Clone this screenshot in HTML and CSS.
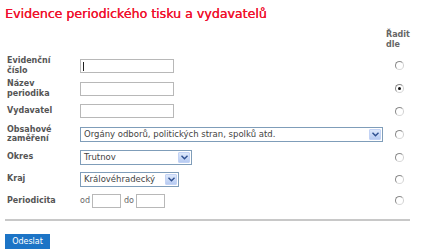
FILE: index.html
```html
<!DOCTYPE html>
<html lang="cs">
<head>
    <meta charset="UTF-8">
    <title>Evidence periodického tisku a vydavatelů</title>
    <link rel="stylesheet" href="styles.css">
</head>
<body>
    <h1 class="title">Evidence periodického tisku a vydavatelů</h1>

    <div class="form">
        <div class="sort-head">Řadit dle</div>

        <label class="lbl">Evidenční číslo</label>
        <div class="field"><span class="input focus"></span></div>
        <div class="sort"><span class="radio"></span></div>

        <label class="lbl">Název periodika</label>
        <div class="field"><span class="input"></span></div>
        <div class="sort"><span class="radio checked"></span></div>

        <label class="lbl">Vydavatel</label>
        <div class="field"><span class="input"></span></div>
        <div class="sort"><span class="radio"></span></div>

        <label class="lbl">Obsahové zaměření</label>
        <div class="field">
            <span class="select wide"><span class="val">Orgány odborů, politických stran, spolků atd.</span><span class="arrow"><svg width="7" height="5" viewBox="0 0 7 5"><path d="M0.5 0.8 L3.5 3.8 L6.5 0.8" fill="none" stroke="#2d4f8f" stroke-width="1.4"/></svg></span></span>
        </div>
        <div class="sort"><span class="radio"></span></div>

        <label class="lbl">Okres</label>
        <div class="field">
            <span class="select okres"><span class="val">Trutnov</span><span class="arrow"><svg width="7" height="5" viewBox="0 0 7 5"><path d="M0.5 0.8 L3.5 3.8 L6.5 0.8" fill="none" stroke="#2d4f8f" stroke-width="1.4"/></svg></span></span>
        </div>
        <div class="sort"><span class="radio"></span></div>

        <label class="lbl">Kraj</label>
        <div class="field">
            <span class="select kraj"><span class="val">Královéhradecký</span><span class="arrow"><svg width="7" height="5" viewBox="0 0 7 5"><path d="M0.5 0.8 L3.5 3.8 L6.5 0.8" fill="none" stroke="#2d4f8f" stroke-width="1.4"/></svg></span></span>
        </div>
        <div class="sort"><span class="radio"></span></div>

        <label class="lbl">Periodicita</label>
        <div class="field period">
            <span>od</span><span class="input small"></span>
            <span>do</span><span class="input small"></span>
        </div>
        <div class="sort"><span class="radio"></span></div>
    </div>

    <hr class="sep">

    <button class="btn">Odeslat</button>
</body>
</html>
```

FILE: styles.css
```css
body {
    margin: 0;
    padding: 0 5px;
    font-family: "DejaVu Sans", Verdana, sans-serif;
    background: #fff;
    color: #555;
}
.title {
    margin: 0;
    padding-top: 6px;
    font-size: 12.6px;
    font-weight: normal;
    color: #f0102c;
    line-height: 16px;
    text-shadow: 0.3px 0 0 #f0102c;
}
.form {
    display: grid;
    grid-template-columns: 73px 306px 27px;
    grid-template-rows: auto 19px 19px 18px 20px 18px 18px 17px;
    row-gap: 4px;
    align-items: center;
    padding-left: 2px;
    margin-top: 8px;
}
.sort-head {
    grid-column: 3;
    font-size: 8px;
    font-weight: bold;
    line-height: 9.5px;
    color: #666;
    margin-bottom: 3px;
}
.lbl {
    font-size: 8px;
    font-weight: bold;
    line-height: 9.5px;
    color: #555;
    width: 50px;
}
.field {
    display: flex;
    align-items: center;
    font-size: 8px;
    color: #666;
}
.input {
    display: block;
    width: 92px;
    height: 12px;
    border: 1px solid #b8b8b8;
    background: #fff;
    box-sizing: content-box;
}
.input.focus {
    background: linear-gradient(90deg, #fff 2px, #222 2px, #222 3px, #fff 3px);
    background-size: 100% 9px;
    background-position: 0 2px;
    background-repeat: no-repeat;
}
.period .input.small {
    width: 27px;
    height: 12px;
    margin: 0 3px 0 2px;
}
.select {
    display: flex;
    align-items: center;
    justify-content: space-between;
    height: 13px;
    border: 1px solid #7f9db9;
    background: #fff;
    font-size: 8.5px;
    color: #444;
}
.select .val {
    padding-left: 3px;
    white-space: nowrap;
}
.select.wide { width: 301px; }
.select.okres { width: 110px; }
.select.kraj { width: 97px; }
.arrow {
    display: flex;
    align-items: center;
    justify-content: center;
    width: 12px;
    height: 11px;
    margin-right: 1px;
    background: linear-gradient(#dde8fb, #b7cbf2);
    border: 1px solid #c3d3f5;
    box-sizing: border-box;
    border-radius: 1px;
}
.sort {
    display: flex;
    justify-content: center;
}
.radio {
    display: block;
    width: 7px;
    height: 7px;
    border-radius: 50%;
    border: 1px solid #9a9a9a;
    border-color: #8a8a8a #d0d0d0 #d8d8d8 #8a8a8a;
    background: #fff;
    position: relative;
}
.radio.checked::after {
    content: "";
    position: absolute;
    left: 2px;
    top: 2px;
    width: 3px;
    height: 3px;
    border-radius: 50%;
    background: #111;
}
.sep {
    width: 405px;
    margin: 10px 0 8px 0;
    border: none;
    border-top: 2px solid #c8c8c8;
}
.btn {
    background-color: #1c74c6;
    color: white;
    border: none;
    padding: 0;
    width: 45px;
    height: 15px;
    font-family: "DejaVu Sans", Verdana, sans-serif;
    font-size: 8px;
    cursor: pointer;
}
```
